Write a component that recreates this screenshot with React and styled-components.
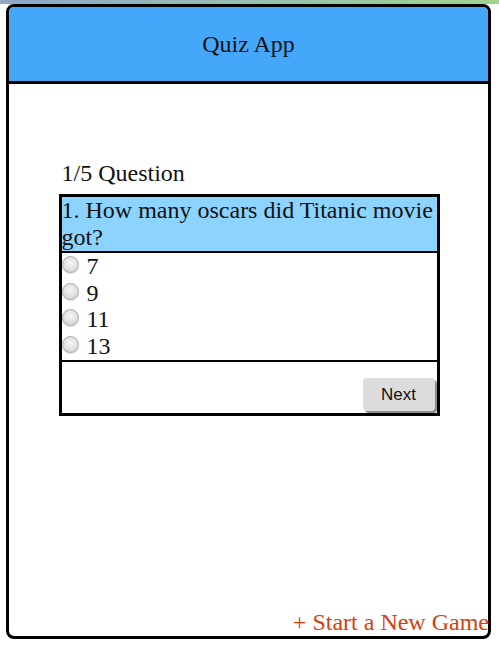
import React from "react";
import styled, { createGlobalStyle } from "styled-components";

const Global = createGlobalStyle`
  html, body { margin: 0; padding: 0; background: #fff; }
  body { font-family: "Liberation Serif", "Times New Roman", serif; font-size: 24px; color: #111; }
`;

const TopStrip = styled.div`
  height: 4px;
  background: linear-gradient(90deg, #8ea7c9 0%, #97bfb0 50%, #a2d48a 100%);
`;

const Frame = styled.div`
  box-sizing: border-box;
  margin: 0 0 0 6px;
  width: 485px;
  height: 635px;
  border: 3px solid #000;
  border-radius: 8px;
  display: flex;
  flex-direction: column;
`;

const Header = styled.header`
  height: 74px;
  flex: none;
  background: #45a7f9;
  border-bottom: 3px solid #000;
  border-radius: 5px 5px 0 0;
  display: flex;
  align-items: center;
  justify-content: center;
  font-size: 24px;
`;

const Main = styled.main`
  flex: 1;
  display: flex;
  flex-direction: column;
  align-items: center;
  padding-top: 75px;
`;

const Quiz = styled.section`
  width: 381px;
  margin-left: 1px;
  display: flex;
  flex-direction: column;
  gap: 7px;
`;

const Counter = styled.div`
  padding-left: 3px;
  line-height: 28px;
`;

const Card = styled.div`
  border: 3px solid #000;
  border-top-width: 2px;
  display: flex;
  flex-direction: column;
`;

const QuestionText = styled.div`
  background: #8cd3fe;
  line-height: 27px;
  border-bottom: 2px solid #000;
  border-top: 1px solid #000;
`;

const Options = styled.div`
  display: flex;
  flex-direction: column;
  border-bottom: 2px solid #000;
`;

const Option = styled.label`
  display: flex;
  align-items: center;
  height: 26.75px;
  gap: 8px;
`;

const Radio = styled.input.attrs({ type: "radio" })`
  appearance: none;
  -webkit-appearance: none;
  margin: 0 0 4px 0;
  width: 17px;
  height: 17px;
  border-radius: 50%;
  border: 1px solid #a9a9a9;
  box-sizing: border-box;
  background: radial-gradient(circle at 50% 40%, #f6f6f6 0%, #dedede 60%, #c8c8c8 100%);
  box-shadow: 0 1px 1px rgba(0, 0, 0, 0.15);
`;

const Footer = styled.div`
  height: 51px;
  display: flex;
  justify-content: flex-end;
  align-items: flex-start;
  padding: 16px 2px 0 0;
  box-sizing: border-box;
`;

const NextButton = styled.button`
  width: 72px;
  height: 33px;
  border: none;
  border-radius: 4px;
  background: #dcdcdc;
  box-shadow: 2px 2px 0 #8a8a8a;
  font-family: "Liberation Sans", Arial, sans-serif;
  font-size: 17px;
  color: #111;
  padding: 0;
`;

const NewGame = styled.a`
  align-self: flex-end;
  margin-right: -1px;
  color: #d63f0c;
  font-size: 24px;
  line-height: 28px;
  text-decoration: none;
  white-space: nowrap;
`;

const options = ["7", "9", "11", "13"];

export default function App() {
  return (
    <>
      <Global />
      <TopStrip />
      <Frame>
        <Header>Quiz App</Header>
        <Main>
          <Quiz>
            <Counter>1/5 Question</Counter>
            <Card>
              <QuestionText>1. How many oscars did Titanic movie got?</QuestionText>
              <Options>
                {options.map((o) => (
                  <Option key={o}>
                    <Radio name="answer" value={o} />
                    {o}
                  </Option>
                ))}
              </Options>
              <Footer>
                <NextButton>Next</NextButton>
              </Footer>
            </Card>
          </Quiz>
        </Main>
        <NewGame>+ Start a New Game</NewGame>
      </Frame>
    </>
  );
}
